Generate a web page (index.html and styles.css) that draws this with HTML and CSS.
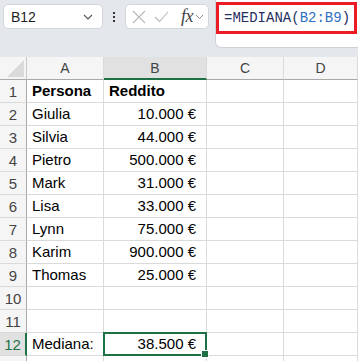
FILE: index.html
```html
<!DOCTYPE html>
<html lang="it">
<head>
    <meta charset="UTF-8">
    <meta name="viewport" content="width=device-width, initial-scale=1.0">
    <title>Mediana</title>
    <link rel="stylesheet" href="styles.css">
</head>
<body>

    <div class="toolbar">
        <div class="name-box">
            <span>B12</span>
            <svg class="chev" width="10" height="6" viewBox="0 0 10 6"><path d="M1 1 L5 5 L9 1" fill="none" stroke="#555" stroke-width="1.1"/></svg>
        </div>
        <div class="dots"><i></i><i></i><i></i></div>
        <div class="fn-box">
            <svg width="14" height="14" viewBox="0 0 14 14"><path d="M1 1 L13 13 M13 1 L1 13" stroke="#b8b8b8" stroke-width="1.1"/></svg>
            <svg width="15" height="12" viewBox="0 0 15 12"><path d="M1 6 L5.5 10.5 L14 1" fill="none" stroke="#b8b8b8" stroke-width="1.1"/></svg>
            <span class="fx">fx</span>
            <svg class="chev" width="9" height="6" viewBox="0 0 9 6"><path d="M1 1 L4.5 4.5 L8 1" fill="none" stroke="#888" stroke-width="1"/></svg>
        </div>
        <div class="formula">
            <div class="highlight">
                <span class="f-op">=MEDIANA(</span><span class="f-ref">B2:B9</span><span class="f-op">)</span>
            </div>
        </div>
    </div>

    <div class="sheet">
        <div class="hd corner"><span class="tri"></span></div>
        <div class="hd col">A</div>
        <div class="hd col active">B</div>
        <div class="hd col">C</div>
        <div class="hd col">D</div>

        <div class="hd row">1</div><div class="c b">Persona</div><div class="c b">Reddito</div><div class="c"></div><div class="c"></div>
        <div class="hd row">2</div><div class="c">Giulia</div><div class="c n">10.000 €</div><div class="c"></div><div class="c"></div>
        <div class="hd row">3</div><div class="c">Silvia</div><div class="c n">44.000 €</div><div class="c"></div><div class="c"></div>
        <div class="hd row">4</div><div class="c">Pietro</div><div class="c n">500.000 €</div><div class="c"></div><div class="c"></div>
        <div class="hd row">5</div><div class="c">Mark</div><div class="c n">31.000 €</div><div class="c"></div><div class="c"></div>
        <div class="hd row">6</div><div class="c">Lisa</div><div class="c n">33.000 €</div><div class="c"></div><div class="c"></div>
        <div class="hd row">7</div><div class="c">Lynn</div><div class="c n">75.000 €</div><div class="c"></div><div class="c"></div>
        <div class="hd row">8</div><div class="c">Karim</div><div class="c n">900.000 €</div><div class="c"></div><div class="c"></div>
        <div class="hd row">9</div><div class="c">Thomas</div><div class="c n">25.000 €</div><div class="c"></div><div class="c"></div>
        <div class="hd row">10</div><div class="c"></div><div class="c"></div><div class="c"></div><div class="c"></div>
        <div class="hd row">11</div><div class="c"></div><div class="c"></div><div class="c"></div><div class="c"></div>
        <div class="hd row active">12</div><div class="c">Mediana:</div><div class="c n selected">38.500 €</div><div class="c"></div><div class="c"></div>
        <div class="hd row"></div><div class="c"></div><div class="c"></div><div class="c"></div><div class="c"></div>
    </div>

</body>
</html>
```
FILE: styles.css
```css
* { box-sizing: border-box; }
body { margin: 0; width: 358px; height: 361px; overflow: hidden; background: #fff; font-family: "Liberation Sans", Arial, sans-serif; }

.toolbar { position: relative; height: 57px; background: #e4e8ec; display: flex; align-items: flex-start; padding: 4px 0 0 3px; }
.name-box {
    width: 100px; height: 25px; background: #fff; border: 1px solid #d3d7db; border-radius: 5px;
    display: flex; align-items: center; justify-content: space-between; padding: 0 9px 0 7px;
    font-size: 14px; color: #1f1f1f;
}
.dots { width: 22px; height: 25px; display: flex; flex-direction: column; align-items: center; justify-content: center; gap: 2px; }
.dots i { width: 2px; height: 2px; background: #333; display: block; }
.fn-box {
    width: 84px; height: 25px; background: #fff; border: 1px solid #d3d7db; border-radius: 5px;
    display: flex; align-items: center; gap: 8px; padding: 0 4px 0 6px;
}
.fx { font-family: "Liberation Serif", serif; font-style: italic; font-size: 18px; color: #444; margin-left: 4px; letter-spacing: -0.5px; }
.fn-box .chev { margin-left: -6px; }

.formula {
    margin-left: 6px; margin-top: -5px; flex: 1; height: 49px; background: #fff;
    border: 1px solid #cfd3d7; border-top: none; border-right: none; border-radius: 0 0 0 6px;
    padding: 3px 0 0 0;
}
.highlight {
    width: 141px; height: 32px; border: 3px solid #ec1c24; padding: 0 0 0 5px;
    font-family: "Liberation Mono", monospace; font-size: 14px; line-height: 27px;
}
.f-op { color: #1f2f5f; }
.f-ref { color: #2f6fc0; }

.sheet { display: grid; grid-template-columns: 27px 77px 103px 77px 74px; grid-auto-rows: 23px; }
.hd { background: #f5f5f5; color: #444; font-size: 14px; display: flex; align-items: center; justify-content: center; }
.hd.col { border-right: 1px solid #dadada; border-bottom: 1px solid #a8a8a8; }
.hd.col.active { background: #e1e1e1; border-bottom: 2px solid #1e7145; }
.corner { position: relative; border-right: 1px solid #c8c8c8; border-bottom: 1px solid #a8a8a8; }
.tri { position: absolute; right: 2px; bottom: 2px; width: 0; height: 0; border-left: 17px solid transparent; border-bottom: 17px solid #dadada; }
.hd.row { border-right: 1px solid #a8a8a8; border-bottom: 1px solid #dadada; font-size: 15px; }
.hd.row.active { background: #e1e1e1; color: #1e7145; border-right: 2px solid #1e7145; }

.c { border-right: 1px solid #dadada; border-bottom: 1px solid #dadada; font-size: 15px; color: #000; padding: 0 4px 0 5px; line-height: 22px; white-space: nowrap; }
.c.b { font-weight: bold; }
.c.n { text-align: right; padding-right: 10px; }
.selected { position: relative; }
.selected::before { content: ""; position: absolute; left: -1px; top: -1px; right: -1px; bottom: -1px; border: 2px solid #1e7145; }
.selected::after { content: ""; position: absolute; right: -3px; bottom: -3px; width: 6px; height: 6px; background: #1e7145; border: 1px solid #fff; }
```
